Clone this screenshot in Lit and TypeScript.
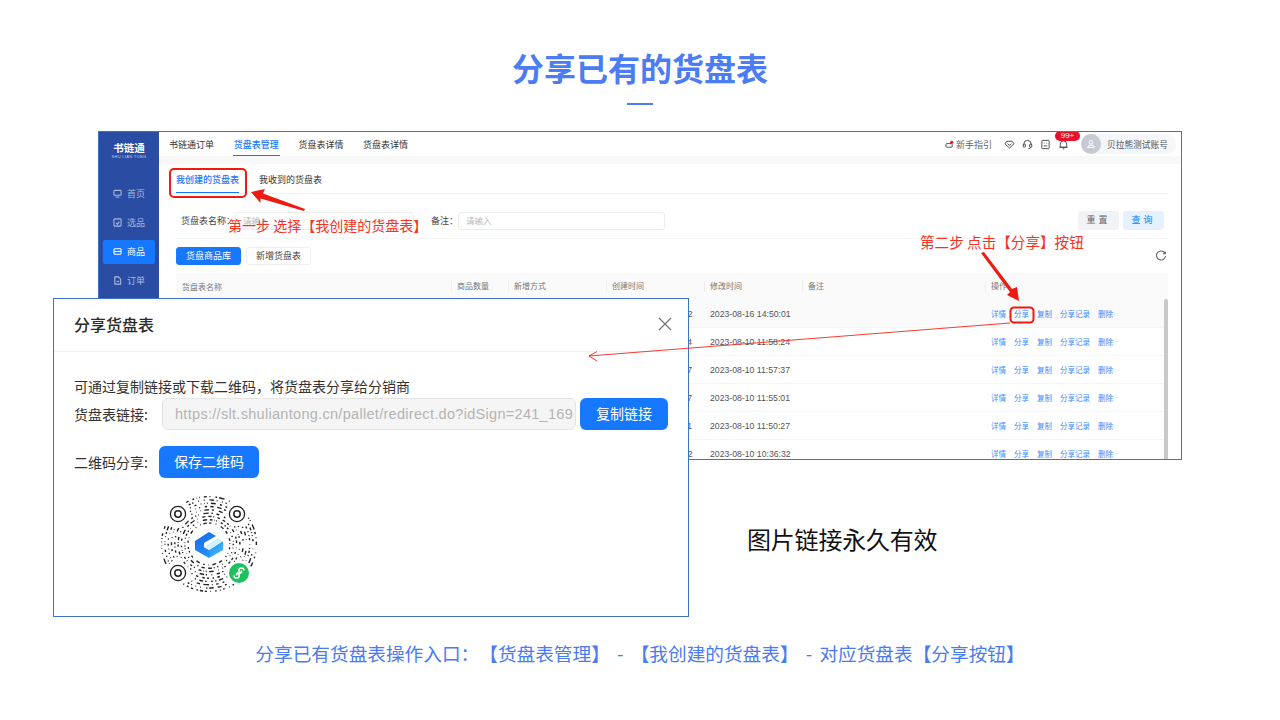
import { LitElement, html, css, svg } from 'lit';
import { customElement } from 'lit/decorators.js';

const ROWS = [
  ['2023-08-16 14:50:02', '2023-08-16 14:50:01'],
  ['2023-08-10 11:58:24', '2023-08-10 11:58:24'],
  ['2023-08-10 11:57:37', '2023-08-10 11:57:37'],
  ['2023-08-10 11:55:07', '2023-08-10 11:55:01'],
  ['2023-08-10 11:50:21', '2023-08-10 11:50:27'],
  ['2023-08-10 10:36:32', '2023-08-10 10:36:32'],
];

const OPS = ['详情', '分享', '复制', '分享记录', '删除'];

// pseudo-random arcs for the round mini program code
function qrPath(): string {
  let seed = 4242;
  const rnd = () => {
    seed = (seed * 1103515245 + 12345) & 0x7fffffff;
    return seed / 0x7fffffff;
  };
  const finders = [[-31, -30], [28, -30], [-31, 29], [30, 29]];
  let d = '';
  for (let r = 21; r <= 47.5; r += 3.3) {
    let a = rnd() * 0.2;
    while (a < Math.PI * 2) {
      const len = (0.5 + rnd() * rnd() * 5.5) / r;
      const x1 = r * Math.cos(a), y1 = r * Math.sin(a);
      const x2 = r * Math.cos(a + len), y2 = r * Math.sin(a + len);
      const near = finders.some(([fx, fy]) => Math.hypot(x1 - fx, y1 - fy) < 11.5 || Math.hypot(x2 - fx, y2 - fy) < 11.5);
      if (!near) d += `M${x1.toFixed(1)} ${y1.toFixed(1)}A${r} ${r} 0 0 1 ${x2.toFixed(1)} ${y2.toFixed(1)}`;
      a += len + (1.6 + rnd() * 3.6) / r;
    }
  }
  return d;
}

@customElement('app-root')
export class AppRoot extends LitElement {
  static styles = css`
    :host {
      display: block;
      font-family: 'Noto Sans CJK SC', sans-serif;
      text-spacing-trim: space-all;
    }
    .slide {
      position: relative;
      width: 1280px;
      height: 720px;
      background: #fff;
      overflow: hidden;
      display: flex;
      flex-direction: column;
      align-items: center;
    }
    h1 {
      margin: 44px 0 0;
      height: 46px;
      line-height: 46px;
      font-size: 32px;
      font-weight: 700;
      color: #4c7cf3;
    }
    .rule {
      width: 26px;
      height: 2px;
      margin-top: 13px;
      background: #4c7cf3;
    }
    .foot {
      position: absolute;
      left: 0;
      right: 0;
      top: 639px;
      text-align: center;
      font-size: 18.67px;
      line-height: 28px;
      word-spacing: 3px;
      color: #4a7bf0;
      white-space: pre;
    }

    /* background app window */
    .screen {
      position: absolute;
      left: 98px;
      top: 131px;
      width: 1084px;
      height: 329px;
      box-sizing: border-box;
      border: 1px solid #3f71c4;
      display: flex;
      overflow: hidden;
      background: #fff;
      color: #444;
    }
    .side {
      width: 60px;
      flex: none;
      background: #2a4ca3;
      display: flex;
      flex-direction: column;
      align-items: center;
      color: #aab8dc;
      font-size: 9px;
    }
    .logo {
      margin-top: 9px;
      color: #fff;
      font-size: 10.5px;
      font-weight: 700;
      line-height: 13px;
    }
    .logo-sub {
      font-size: 4px;
      line-height: 6px;
      color: #c5d0ea;
      letter-spacing: 0.3px;
      font-family: 'Liberation Sans', sans-serif;
    }
    .menu {
      margin-top: 21px;
      width: 52px;
      display: flex;
      flex-direction: column;
      gap: 5.3px;
    }
    .menu div {
      height: 24px;
      border-radius: 2px;
      display: flex;
      align-items: center;
      justify-content: center;
      gap: 5px;
    }
    .menu .on {
      background: #1677ff;
      color: #fff;
    }
    .menu svg {
      width: 9px;
      height: 9px;
      fill: none;
      stroke: currentColor;
      stroke-width: 1.2;
    }
    .main {
      flex: 1;
      min-width: 0;
      display: flex;
      flex-direction: column;
    }
    .top {
      height: 24px;
      flex: none;
      display: flex;
      align-items: center;
      padding: 0 5px 0 10px;
      gap: 19.7px;
      font-size: 9px;
      color: #333;
    }
    .top .nav {
      position: relative;
      line-height: 23px;
    }
    .top .nav.on {
      color: #1677ff;
      font-weight: 500;
    }
    .top .nav.on::after {
      content: '';
      position: absolute;
      left: -1px;
      right: -1px;
      bottom: 0;
      height: 1px;
      background: #1677ff;
    }
    .tools {
      margin-left: auto;
      display: flex;
      align-items: center;
      color: #555;
    }
    .guide {
      display: flex;
      align-items: center;
      gap: 2px;
      margin-right: 12px;
      font-size: 9px;
      color: #666;
    }
    .tool {
      width: 11px;
      height: 11px;
      fill: none;
      stroke: #444;
      stroke-width: 1;
      flex: none;
    }
    .tool.small {
      width: 9px;
      height: 9px;
    }
    .tool.t1 {
      margin-left: 7px;
    }
    .bell {
      position: relative;
      display: flex;
      margin-left: 7px;
    }
    .badge {
      position: absolute;
      left: -3px;
      top: -8px;
      width: 25px;
      height: 10px;
      border-radius: 5px;
      background: #e8112d;
      color: #fff;
      font: 8px/10px 'Liberation Sans', sans-serif;
      text-align: center;
    }
    .user {
      display: flex;
      align-items: center;
      gap: 6px;
      height: 20px;
      width: 95px;
      margin-left: 12px;
      border-radius: 10px;
      background: #f4f6fa;
      font-size: 8.7px;
      color: #555;
    }
    .avatar {
      width: 20px;
      height: 20px;
      border-radius: 50%;
      background: #c6cad2;
      display: flex;
      align-items: center;
      justify-content: center;
    }
    .avatar svg {
      width: 10px;
      height: 10px;
      fill: none;
      stroke: #fff;
      stroke-width: 1;
    }
    .strip {
      height: 8px;
      flex: none;
      background: #f8f8f8;
    }
    .panel {
      flex: 1;
      padding: 0 13px 0 17px;
      min-height: 0;
      position: relative;
    }
    .tabs {
      height: 29px;
      display: flex;
      gap: 20px;
      border-bottom: 1px solid #f1f1f1;
      font-size: 9px;
      line-height: 31px;
      color: #333;
    }
    .tabs .on {
      color: #1677ff;
      font-weight: 500;
      height: 29px;
      box-sizing: border-box;
      border-bottom: 1px solid #1677ff;
    }
    .filter {
      height: 45px;
      box-sizing: border-box;
      border-bottom: 1px solid #f6f6f6;
      display: flex;
      align-items: center;
      padding: 9px 4px 0 5px;
      font-size: 9px;
      color: #444;
    }
    .field {
      height: 18px;
      box-sizing: border-box;
      border: 1px solid #ececec;
      border-radius: 3px;
      padding-left: 7px;
      line-height: 15px;
      font-size: 8.5px;
      color: #bbb;
    }
    .field.a {
      width: 179px;
      margin-right: 17px;
    }
    .field.b {
      width: 207px;
    }
    .fbtn {
      height: 19px;
      width: 41px;
      border-radius: 3px;
      background: #f1f3f6;
      color: #666;
      text-align: center;
      line-height: 18px;
      letter-spacing: 3px;
    }
    .fbtn.q {
      background: #e5f1ff;
      color: #1677ff;
      margin-left: 4px;
    }
    .spacer {
      flex: 1;
    }
    .acts {
      height: 34px;
      display: flex;
      align-items: center;
      gap: 5px;
      font-size: 9px;
    }
    .acts span {
      width: 65px;
      height: 18px;
      box-sizing: border-box;
      border: 1px solid #eee;
      border-radius: 3px;
      text-align: center;
      line-height: 15px;
    }
    .acts .p {
      background: #1677ff;
      border-color: #1677ff;
      color: #fff;
    }
    .acts svg {
      width: 12px;
      height: 12px;
      margin-left: auto;
      margin-right: 1px;
      fill: none;
      stroke: #666;
      stroke-width: 1.1;
    }
    .row {
      display: grid;
      grid-template-columns: 275px 57px 98px 98px 98px 183px 1fr;
      align-items: center;
      height: 28px;
      box-sizing: border-box;
      border-bottom: 1px solid #f5f5f5;
      font: 8.7px 'Liberation Sans', 'Noto Sans CJK SC', sans-serif;
      color: #555;
    }
    .row > span {
      padding-left: 6px;
      white-space: nowrap;
    }
    .row.head {
      height: 27px;
      background: #fafafa;
      border: 0;
      color: #777;
      font-size: 8px;
    }
    .row.head > span + span {
      border-left: 1px solid #eee;
      line-height: 11px;
      padding-left: 5px;
    }
    .row.first {
      background: #fafafa;
    }
    .ops {
      display: flex;
      gap: 8px;
      color: #3d8bff;
      font-size: 7.5px;
    }
    .scroll {
      position: absolute;
      right: 13px;
      top: 135px;
      width: 4px;
      height: 170px;
      border-radius: 2px;
      background: #c9c9c9;
    }

    /* dialog that lies over the window */
    .dialog {
      position: absolute;
      left: 53px;
      top: 298px;
      width: 636px;
      height: 319px;
      box-sizing: border-box;
      border: 1px solid #3f71c4;
      background: #fff;
      color: #333;
      font-size: 14px;
    }
    .d-head {
      height: 53px;
      box-sizing: border-box;
      border-bottom: 1px solid #f2f2f2;
      padding: 0 16px 2px 20px;
      display: flex;
      align-items: center;
      justify-content: space-between;
      font-size: 16px;
      font-weight: 500;
      color: #2b2b2b;
    }
    .d-head svg {
      width: 14px;
      height: 14px;
      stroke: #777;
      stroke-width: 1.3;
      fill: none;
    }
    .d-body {
      padding: 24px 0 0 20px;
      display: flex;
      flex-direction: column;
    }
    .desc {
      line-height: 20px;
      height: 22px;
    }
    .line {
      display: flex;
      align-items: center;
      height: 32px;
    }
    .label {
      width: 88px;
      flex: none;
    }
    .line.qr .label {
      width: 85px;
    }
    .url {
      box-sizing: border-box;
      width: 414px;
      height: 32px;
      border: 1px solid #e4e4e4;
      border-radius: 6px;
      background: #f5f5f5;
      padding: 0 8px 0 12px;
      overflow: hidden;
      white-space: nowrap;
      font: 14.5px/30px 'Liberation Sans', sans-serif;
      letter-spacing: 0.3px;
      color: #b4b4b4;
    }
    .btn {
      height: 32px;
      border-radius: 6px;
      background: #1677ff;
      color: #fff;
      text-align: center;
      line-height: 31px;
      font-size: 14px;
    }
    .btn.copy {
      width: 88px;
      margin-left: 4px;
    }
    .btn.save {
      width: 100px;
    }
    .line.qr {
      margin-top: 16px;
    }
    .code {
      position: absolute;
      left: 103px;
      top: 193px;
      width: 104px;
      height: 104px;
    }
    .note {
      position: absolute;
      left: 747px;
      top: 521px;
      font-size: 24px;
      line-height: 36px;
      letter-spacing: -0.2px;
      color: #111;
    }
    .red {
      position: absolute;
      color: #f5331f;
      white-space: pre;
      line-height: 20px;
    }
    .red.one {
      left: 228px;
      top: 215px;
      font-size: 14px;
    }
    .red.two {
      left: 920px;
      top: 232px;
      font-size: 14.6px;
    }
    .marks {
      position: absolute;
      left: 0;
      top: 0;
      width: 1280px;
      height: 720px;
      pointer-events: none;
    }
  `;

  private renderRow(r: string[], i: number) {
    return html`
      <div class="row ${i === 0 ? 'first' : ''}">
        <span></span><span></span><span></span>
        <span>${r[0]}</span>
        <span>${r[1]}</span>
        <span></span>
        <span class="ops">${OPS.map((o) => html`<span>${o}</span>`)}</span>
      </div>
    `;
  }

  private renderCode() {
    const finder = (x: number, y: number) => svg`
      <circle cx=${x} cy=${y} r="7.6" fill="none" stroke="#222" stroke-width="1.3"/>
      <circle cx=${x} cy=${y} r="3.2" fill="none" stroke="#222" stroke-width="1.5"/>`;
    return html`
      <svg class="code" viewBox="-52 -52 104 104">
        <defs>
          <linearGradient id="front" x1="0" y1="0" x2="0.4" y2="1">
            <stop offset="0" stop-color="#1565ee"/>
            <stop offset="1" stop-color="#2590f3"/>
          </linearGradient>
          <linearGradient id="side" x1="0" y1="0" x2="1" y2="1">
            <stop offset="0" stop-color="#1f8ff5"/>
            <stop offset="1" stop-color="#45bdf8"/>
          </linearGradient>
        </defs>
        <path d=${qrPath()} fill="none" stroke="#222" stroke-width="1.4"/>
        ${finder(-31, -30)}${finder(28, -30)}${finder(-31, 29)}
        <path d="M-14 -3L0 -12L7 -8L-5 -1V3L0 6V14L-14 6Z" fill="url(#front)"/>
        <path d="M0 6L14 -3V6L0 14Z" fill="url(#side)"/>
        <path d="M-5 3L0 6L14 -3L9 -6Z" fill="#d5f0fd"/>
        <circle cx="30" cy="29" r="10" fill="#1fc05f"/>
        <path d="M25 31.500a2.600 2.600 0 1 0 2.600 -2.600M35 26.500a2.600 2.600 0 1 0 -2.600 2.600M27.600 29V31.500M32.400 26.500V29" fill="none" stroke="#fff" stroke-width="1.5"/>
      </svg>
    `;
  }

  render() {
    return html`
      <div class="slide">
        <h1>分享已有的货盘表</h1>
        <div class="rule"></div>

        <div class="screen">
          <div class="side">
            <div class="logo">书链通</div>
            <div class="logo-sub">SHU LIAN TONG</div>
            <div class="menu">
              <div><svg viewBox="0 0 10 10"><rect x="1" y="1.500" width="8" height="5.500" rx="1"/><path d="M3 9H7"/></svg>首页</div>
              <div><svg viewBox="0 0 10 10"><rect x="1" y="1" width="8" height="8" rx="1"/><path d="M3.500 5.500L5 7L7 4"/></svg>选品</div>
              <div class="on"><svg viewBox="0 0 10 10"><rect x="1" y="2" width="8" height="6" rx="1"/><path d="M1 5H9"/></svg>商品</div>
              <div><svg viewBox="0 0 10 10"><path d="M2 1H6L8.500 3.500V9H2Z"/><path d="M4 6H7"/></svg>订单</div>
            </div>
          </div>
          <div class="main">
            <div class="top">
              <span class="nav">书链通订单</span>
              <span class="nav on">货盘表管理</span>
              <span class="nav">货盘表详情</span>
              <span class="nav">货盘表详情</span>
              <div class="tools">
                <span class="guide">
                  <svg class="tool small" viewBox="0 0 10 10"><rect x="1" y="4" width="7" height="4" rx="1"/><circle cx="7.500" cy="2.500" r="1.800" fill="#e8112d" stroke="none"/></svg>
                  新手指引
                </span>
                <svg class="tool" viewBox="0 0 12 12"><path d="M3 2.500H9L11 5.200L6 10L1 5.200ZM4 5.200L6 7L8 5.200"/></svg>
                <svg class="tool t1" viewBox="0 0 12 12"><path d="M2 7V5.500a4 4 0 0 1 8 0V7M10 8.500Q9.500 10.500 7 10.500"/><rect x="1.300" y="5.500" width="2.400" height="3.500" rx="1"/><rect x="8.300" y="5.500" width="2.400" height="3.500" rx="1"/></svg>
                <svg class="tool t1" viewBox="0 0 12 12"><rect x="2" y="1.500" width="8" height="9" rx="0.800"/><path d="M4.200 4.500h.8M7 4.500h.8M4.200 7.500H7.800"/></svg>
                <span class="bell">
                  <svg class="tool" viewBox="0 0 12 12"><path d="M2.500 9V5.500a3.500 3.500 0 0 1 7 0V9ZM1.500 9H10.500M5 10.800H7"/></svg>
                  <span class="badge">99+</span>
                </span>
                <div class="user">
                  <span class="avatar"><svg viewBox="0 0 10 10"><circle cx="5" cy="3.300" r="1.800"/><path d="M1.500 8.500a3.500 2.400 0 0 1 7 0Z"/></svg></span>
                  贝拉熊测试账号
                </div>
              </div>
            </div>
            <div class="strip"></div>
            <div class="panel">
              <div class="tabs"><span class="on">我创建的货盘表</span><span>我收到的货盘表</span></div>
              <div class="filter">
                <span>货盘表名称：</span>
                <span class="field a">请输入</span>
                <span>备注：</span>
                <span class="field b">请输入</span>
                <span class="spacer"></span>
                <span class="fbtn">重置</span>
                <span class="fbtn q">查询</span>
              </div>
              <div class="acts">
                <span class="p">货盘商品库</span>
                <span>新增货盘表</span>
                <svg viewBox="0 0 12 12"><path d="M10 3.400A4.500 4.500 0 1 0 10.500 6M10.300 1.500V3.800H8"/></svg>
              </div>
              <div class="row head">
                <span>货盘表名称</span><span>商品数量</span><span>新增方式</span><span>创建时间</span><span>修改时间</span><span>备注</span><span>操作</span>
              </div>
              ${ROWS.map((r, i) => this.renderRow(r, i))}
              <div class="scroll"></div>
            </div>
          </div>
        </div>

        <div class="red one">第一步 选择【我创建的货盘表】</div>
        <div class="red two">第二步 点击【分享】按钮</div>

        <div class="dialog">
          <div class="d-head">
            <span>分享货盘表</span>
            <svg viewBox="0 0 14 14"><path d="M1 1L13 13M13 1L1 13"/></svg>
          </div>
          <div class="d-body">
            <div class="desc">可通过复制链接或下载二维码，将货盘表分享给分销商</div>
            <div class="line">
              <span class="label">货盘表链接:</span>
              <span class="url">https://slt.shuliantong.cn/pallet/redirect.do?idSign=241_169</span>
              <span class="btn copy">复制链接</span>
            </div>
            <div class="line qr">
              <span class="label">二维码分享:</span>
              <span class="btn save">保存二维码</span>
            </div>
          </div>
          ${this.renderCode()}
        </div>

        <div class="note">图片链接永久有效</div>
        <div class="foot">分享已有货盘表操作入口：【货盘表管理】 - 【我创建的货盘表】 - 对应货盘表【分享按钮】</div>

        <svg class="marks" viewBox="0 0 1280 720">
          <rect x="170" y="169" width="76" height="28" rx="4" fill="none" stroke="#f01a10" stroke-width="2"/>
          <path d="M251 192L265 189L263 193.500L305 209L304 211L260.500 198.500L260.500 203Z" fill="#f01a10"/>
          <rect x="1010.500" y="307.500" width="23" height="15" rx="3.500" fill="none" stroke="#f01a10" stroke-width="2"/>
          <path d="M981 253L984 252L1012 289L1017 287L1019 301L1007 295L1010 292Z" fill="#f01a10"/>
          <path d="M1010 323L589 356M597 351.500L589 356L597 361" fill="none" stroke="#f0281c" stroke-width="0.9"/>
        </svg>
      </div>
    `;
  }
}
